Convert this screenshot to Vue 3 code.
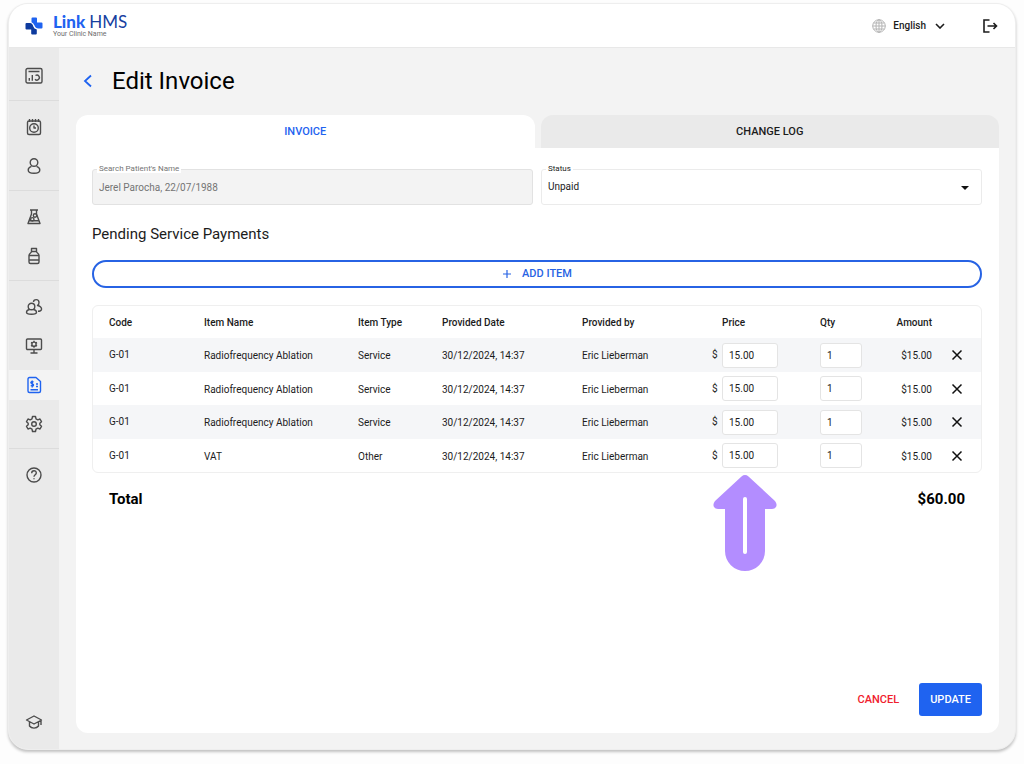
<script setup>
import { ref, computed } from 'vue'

const navGroups = [
  [{ id: 'dashboard', label: 'Dashboard' }],
  [{ id: 'calendar', label: 'Appointments' }, { id: 'patient', label: 'Patients' }],
  [{ id: 'lab', label: 'Laboratory' }, { id: 'pharmacy', label: 'Pharmacy' }],
  [
    { id: 'users', label: 'Users' },
    { id: 'monitor', label: 'Workstation' },
    { id: 'invoice', label: 'Invoices', active: true },
    { id: 'settings', label: 'Settings' }
  ],
  [{ id: 'help', label: 'Help' }]
]

const status = ref('Unpaid')
const patient = ref('Jerel Parocha, 22/07/1988')

const makeItem = (id, name, type) => ({
  id,
  code: 'G-01',
  name,
  type,
  date: '30/12/2024, 14:37',
  by: 'Eric Lieberman',
  price: '15.00',
  qty: '1'
})
const items = ref([
  makeItem(1, 'Radiofrequency Ablation', 'Service'),
  makeItem(2, 'Radiofrequency Ablation', 'Service'),
  makeItem(3, 'Radiofrequency Ablation', 'Service'),
  makeItem(4, 'VAT', 'Other')
])

const amount = (item) => (Number(item.price) || 0) * (Number(item.qty) || 0)
const money = (value) => '$' + value.toFixed(2)
const total = computed(() => items.value.reduce((sum, item) => sum + amount(item), 0))
const removeItem = (id) => {
  items.value = items.value.filter((item) => item.id !== id)
}
const addItem = () => {
  items.value.push(makeItem(Date.now(), 'Radiofrequency Ablation', 'Service'))
}
</script>

<template>
  <div class="window">
    <header class="topbar">
      <a class="brand" href="#">
        <svg class="brand-mark" viewBox="0 0 18 18" aria-hidden="true">
          <path class="mark-light" d="M6.500 1.500Q6.500 .5 7.500 .5H11Q12 .5 12 1.500V5.500H16.500Q17.500 5.500 17.500 6.500V10.500Q17.500 11.500 16.500 11.500H13.500Q10.500 11.500 9.500 8.500Q8.500 6 6.500 5.300Z" />
          <path class="mark-dark" d="M1.500 6H5Q7.500 6 8.300 9.500Q9 12 11.800 12.400V16.500Q11.800 17.500 10.800 17.500H7.200Q6.200 17.500 6.200 16.500V12.500H1.500Q.5 12.500 .5 11.500V7Q.5 6 1.500 6Z" />
        </svg>
        <span class="brand-text">
          <span class="brand-name"><b>Link</b><span>HMS</span></span>
          <span class="brand-sub">Your Clinic Name</span>
        </span>
      </a>
      <div class="top-actions">
        <button class="language" type="button">
          <svg class="globe" viewBox="0 0 14 14" aria-hidden="true">
            <circle cx="7" cy="7" r="6.300" />
            <ellipse cx="7" cy="7" rx="3" ry="6.300" />
            <path d="M7 .7V13.300M.7 7H13.300M1.500 4H12.500M1.500 10H12.500" />
          </svg>
          <span>English</span>
          <svg class="chevron" viewBox="0 0 10 6" aria-hidden="true"><path d="M1 1L5 5L9 1" /></svg>
        </button>
        <button class="logout" type="button" aria-label="Log out">
          <svg viewBox="0 0 16 14" aria-hidden="true">
            <path d="M7.500 1H2V13H7.500M5.500 7H14.500M11.500 4L14.500 7L11.500 10" />
          </svg>
        </button>
      </div>
    </header>

    <div class="body">
      <nav class="sidebar" aria-label="Main">
        <div v-for="(group, g) in navGroups" :key="g" class="nav-group">
          <a
            v-for="item in group"
            :key="item.id"
            href="#"
            class="nav-item"
            :class="{ active: item.active }"
            :aria-label="item.label"
          >
            <svg class="nav-icon" viewBox="0 0 18 18" aria-hidden="true">
              <g v-if="item.id === 'dashboard'">
                <rect x="1" y="1.500" width="16" height="14.500" rx="1.500" />
                <path d="M3.500 4.500H14.500M4.300 11V13.800M7.300 8V13.800M10.500 8.500A2.500 2.500 0 1 1 10 12.300" />
              </g>
              <g v-else-if="item.id === 'calendar'">
                <rect x="2.500" y="3" width="13" height="13.500" rx="1.500" />
                <path d="M4.500 1V4M7.500 1V4M10.500 1V4M13.500 1V4M9 7.500V10H11" />
                <circle cx="9" cy="10" r="4.300" />
              </g>
              <g v-else-if="item.id === 'patient'">
                <circle cx="9" cy="5.500" r="3.800" />
                <path d="M6.500 9.300C4 10 3.200 11.500 3.200 13C3.200 15.300 6 16.300 9 16.300S14.800 15.300 14.800 13C14.800 11.500 14 10 11.500 9.300" />
              </g>
              <g v-else-if="item.id === 'lab'">
                <path d="M5 2H13M6.500 2V6L3 15.500H15L11.500 6V2M4 12.800H14" />
                <circle cx="10" cy="7.500" r="1.700" />
                <circle cx="7.300" cy="11.300" r="1.700" />
              </g>
              <g v-else-if="item.id === 'pharmacy'">
                <path d="M6.500 1.500H11.500V4.500H6.500ZM6.500 4.500C6.500 6 4 6 4 8.500V15Q4 16.500 5.500 16.500H12.500Q14 16.500 14 15V8.500C14 6 11.500 6 11.500 4.500M4 8.500H14M4 13H14" />
              </g>
              <g v-else-if="item.id === 'users'">
                <circle cx="6.500" cy="8.500" r="3.300" />
                <path d="M4.500 11.500C2.500 12 1.500 13 1.500 14.300C1.500 16 4 16.300 6.500 16.300S11.500 16 11.500 14.300C11.500 13 10.500 12 8.500 11.500M8.500 4C8.500 1 14 .500 14 4.500C14 6 13.500 7 12.500 7.500C15 8 17 9.500 16.500 11.500C16 13 14.500 13.300 13 13.300" />
              </g>
              <g v-else-if="item.id === 'monitor'">
                <rect x="1.500" y="2" width="15" height="10.500" rx="1" />
                <path d="M9 12.500V16M5.500 16H12.500M9 3.800V5M9 9.500V10.700M6 5.500L7 6M11 8.500L12 9M6 9L7 8.500M11 6L12 5.500" />
                <circle cx="9" cy="7.200" r="2.100" />
              </g>
              <g v-else-if="item.id === 'invoice'">
                <path d="M4.500 1.500H11L15.500 5.500V15Q15.500 16.500 14 16.500H4.500Q3 16.500 3 15V3Q3 1.500 4.500 1.500ZM8.500 6C6.500 5 5.500 6 6 7C6.500 8 8.500 7.500 8.500 9C8.500 10.200 7 10.200 5.700 9.500M7.200 4.500V11.500M11 8H13M11 10.500H13M5.500 13.800H13" />
              </g>
              <g v-else-if="item.id === 'settings'">
                <path d="M7.500 1.500H10.500L11 3.800L12.800 4.800L15 4L16.500 6.700L14.800 8.200V9.800L16.500 11.300L15 14L12.800 13.200L11 14.200L10.500 16.500H7.500L7 14.200L5.200 13.200L3 14L1.500 11.300L3.200 9.800V8.200L1.500 6.700L3 4L5.200 4.800L7 3.800Z" />
                <circle cx="9" cy="9" r="2.300" />
              </g>
              <g v-else>
                <circle cx="9" cy="9" r="7" />
                <path d="M6.700 7.200C6.700 4 11.300 4 11.300 7C11.300 8.800 9 8.800 9 10.800M9 12.200V13.300" />
              </g>
            </svg>
          </a>
        </div>
        <a class="nav-item academy" href="#" aria-label="Academy">
          <svg class="nav-icon" viewBox="0 0 18 18" aria-hidden="true">
            <path d="M1.500 7L9 3L16.500 7L9 11ZM4.500 9V13C6.500 15.800 11.500 15.800 13.500 13V9M16 7.500V12" />
          </svg>
        </a>
      </nav>

      <main class="content">
        <div class="title-row">
          <button class="back" type="button" aria-label="Back">
            <svg viewBox="0 0 10 14" aria-hidden="true"><path d="M8 1.500L2 7L8 12.500" /></svg>
          </button>
          <h1>Edit Invoice</h1>
        </div>

        <div class="tabs" role="tablist">
          <button class="tab selected" type="button" role="tab" aria-selected="true">INVOICE</button>
          <button class="tab" type="button" role="tab" aria-selected="false">CHANGE LOG</button>
        </div>

        <section class="panel">
          <div class="fields">
            <div class="field disabled">
              <label for="patient">Search Patient's Name</label>
              <input id="patient" v-model="patient" type="text" disabled />
            </div>
            <div class="field">
              <label for="status">Status</label>
              <select id="status" v-model="status">
                <option>Unpaid</option>
                <option>Paid</option>
              </select>
              <svg class="caret" viewBox="0 0 8 4" aria-hidden="true"><path d="M0 0H8L4 4Z" /></svg>
            </div>
          </div>

          <h2>Pending Service Payments</h2>

          <button class="add" type="button" @click="addItem">
            <svg viewBox="0 0 10 10" aria-hidden="true"><path d="M5 1V9M1 5H9" /></svg>
            <span>ADD ITEM</span>
          </button>

          <div class="table-box">
            <table>
              <colgroup>
                <col class="c-code" /><col class="c-name" /><col class="c-type" />
                <col class="c-date" /><col class="c-by" /><col class="c-price" />
                <col class="c-qty" /><col class="c-amount" /><col class="c-remove" />
              </colgroup>
              <thead>
                <tr>
                  <th class="code">Code</th>
                  <th>Item Name</th>
                  <th>Item Type</th>
                  <th>Provided Date</th>
                  <th>Provided by</th>
                  <th class="price-head">Price</th>
                  <th>Qty</th>
                  <th class="amount">Amount</th>
                  <th></th>
                </tr>
              </thead>
              <tbody>
                <tr v-for="item in items" :key="item.id">
                  <td class="code">{{ item.code }}</td>
                  <td class="text">{{ item.name }}</td>
                  <td class="text">{{ item.type }}</td>
                  <td class="text">{{ item.date }}</td>
                  <td class="text">{{ item.by }}</td>
                  <td>
                    <label class="price">
                      <span>$</span>
                      <input v-model="item.price" type="text" aria-label="Price" />
                    </label>
                  </td>
                  <td><input v-model="item.qty" class="qty" type="text" aria-label="Quantity" /></td>
                  <td class="text amount">{{ money(amount(item)) }}</td>
                  <td class="remove-cell">
                    <button class="remove" type="button" aria-label="Remove item" @click="removeItem(item.id)">
                      <svg viewBox="0 0 12 12" aria-hidden="true"><path d="M1.500 1.500L10.500 10.500M10.500 1.500L1.500 10.500" /></svg>
                    </button>
                  </td>
                </tr>
              </tbody>
            </table>
            <svg class="pointer" viewBox="0 0 64 96" aria-hidden="true">
              <path class="pointer-body" d="M28.500 1.500Q32 -1.300 35.500 1.500L62 26Q64.500 29 63 32Q61.800 34 59 34H52V76A20 20 0 0 1 12 76V34H5Q2.200 34 1 32Q-.5 29 2 26Z" />
              <path class="pointer-line" d="M32 24V77" />
            </svg>
          </div>

          <div class="total">
            <span>Total</span>
            <span>{{ money(total) }}</span>
          </div>

          <div class="actions">
            <button class="cancel" type="button">CANCEL</button>
            <button class="update" type="button">UPDATE</button>
          </div>
        </section>
      </main>
    </div>
  </div>
</template>

<style>
body {
  margin: 0;
  background: #fdfdfd;
}
</style>

<style scoped>
* {
  box-sizing: border-box;
}
.window {
  display: flex;
  flex-direction: column;
  min-height: calc(100vh - 17px);
  margin: 3px 8px 14px;
  overflow: hidden;
  border: 1px solid #eeeeee;
  border-radius: 20px;
  background: #f3f3f3;
  box-shadow: 0 2px 3px rgba(0, 0, 0, 0.24);
  color: #1c1c1c;
  font: 10px/16px Roboto, "Liberation Sans", sans-serif;
}
button,
input,
select {
  margin: 0;
  padding: 0;
  border: 0;
  background: none;
  color: inherit;
  font: inherit;
}
button {
  cursor: pointer;
}
svg {
  display: block;
  flex: none;
  fill: none;
  stroke: currentColor;
}
a {
  color: inherit;
  text-decoration: none;
}

.topbar {
  display: flex;
  align-items: center;
  justify-content: space-between;
  height: 44px;
  padding: 0 16px;
  border-bottom: 1px solid #e8e8e8;
  background: #ffffff;
}
.brand {
  display: flex;
  align-items: center;
  gap: 10px;
}
.brand-mark {
  width: 18px;
  height: 18px;
  stroke: none;
}
.mark-light {
  fill: #1f63f0;
}
.mark-dark {
  fill: #0d3a9e;
}
.brand-text {
  display: flex;
  flex-direction: column;
}
.brand-name {
  display: flex;
  gap: 4px;
  color: #16409f;
  font: 17px/16px Lato, sans-serif;
}
.brand-name b {
  color: #1f63f0;
  font-weight: 900;
}
.brand-sub {
  color: #6e6e6e;
  font-size: 7px;
  line-height: 8px;
}
.top-actions {
  display: flex;
  align-items: center;
  gap: 36px;
}
.language {
  display: flex;
  align-items: center;
  font-weight: 500;
}
.globe {
  width: 14px;
  height: 14px;
  margin-right: 7px;
  color: #b4b4b4;
}
.chevron {
  width: 10px;
  height: 6px;
  margin-left: 9px;
  stroke-width: 1.6;
}
.logout svg {
  width: 18px;
  height: 14px;
  stroke-width: 1.6;
}

.body {
  display: flex;
  flex: 1;
}
.sidebar {
  display: flex;
  flex-direction: column;
  width: 50px;
  background: #eaeaea;
  color: #4c4c4c;
}
.nav-group {
  display: flex;
  flex-direction: column;
  gap: 9px;
  padding: 11px 0 9px;
  border-bottom: 1px solid #dcdcdc;
}
.nav-group:nth-last-child(2) {
  border-bottom: 0;
}
.nav-group:first-child {
  padding-top: 13px;
}
.nav-item {
  display: flex;
  align-items: center;
  justify-content: center;
  height: 30px;
}
.nav-item.active {
  background: #f3f3f3;
  color: #1f63f0;
}
.academy {
  margin: auto 0 12px;
}
.nav-icon {
  width: 18px;
  height: 18px;
  stroke-width: 1.4;
  stroke-linejoin: round;
}

.content {
  display: flex;
  flex: 1;
  flex-direction: column;
  min-width: 0;
  padding: 17px 16px 16px 17px;
}
.title-row {
  display: flex;
  align-items: center;
  gap: 19px;
  height: 32px;
  margin-bottom: 18px;
  padding-left: 7px;
}
.back {
  color: #1f63f0;
}
.back svg {
  width: 10px;
  height: 14px;
  stroke-width: 1.8;
}
h1 {
  margin: 0;
  color: #000000;
  font-size: 24px;
  font-weight: 400;
  line-height: 32px;
}
.tabs {
  display: flex;
  gap: 6px;
}
.tab {
  flex: 1;
  height: 33px;
  border-radius: 12px 12px 0 0;
  background: #eaeaea;
  font-size: 11px;
  font-weight: 500;
}
.tab.selected {
  background: #ffffff;
  color: #1f63f0;
}
.panel {
  display: flex;
  flex: 1;
  flex-direction: column;
  padding: 21px 17px 17px 16px;
  border-radius: 0 0 12px 12px;
  background: #ffffff;
}
.fields {
  display: grid;
  grid-template-columns: 1fr 1fr;
  gap: 8px;
}
.field {
  position: relative;
  height: 36px;
  border: 1px solid #ebebeb;
  border-radius: 3px;
}
.field.disabled {
  border-color: #e2e2e2;
  background: #f3f3f3;
  color: #757575;
}
.field label {
  position: absolute;
  top: -5px;
  left: 4px;
  padding: 0 2px;
  background: #ffffff;
  font-size: 8px;
  line-height: 8px;
}
.field input,
.field select {
  display: block;
  width: 100%;
  height: 34px;
  padding: 0 6px;
  appearance: none;
}
.caret {
  position: absolute;
  top: 16px;
  right: 12px;
  width: 8px;
  height: 4px;
  fill: #111111;
  stroke: none;
  pointer-events: none;
}
h2 {
  margin: 19px 0 16px;
  font-size: 15px;
  font-weight: 400;
  line-height: 20px;
}
.add {
  display: flex;
  align-items: center;
  justify-content: center;
  gap: 10px;
  height: 28px;
  border: 2px solid #2763e4;
  border-radius: 14px;
  color: #2763e4;
  font-size: 11px;
  font-weight: 500;
}
.add svg {
  width: 10px;
  height: 10px;
  stroke-width: 1.2;
}

.table-box {
  position: relative;
  margin-top: 17px;
}
table {
  width: 100%;
  border: 1px solid #efefef;
  border-radius: 6px;
  border-spacing: 0;
  table-layout: fixed;
}
.c-code { width: 111px; }
.c-name { width: 154px; }
.c-type { width: 84px; }
.c-date { width: 140px; }
.c-by { width: 130px; }
.c-price { width: 108px; }
.c-qty { width: 52px; }
.c-amount { width: 60px; }
.c-remove { width: 49px; }
th,
td {
  height: 33px;
  padding: 0;
  text-align: left;
  white-space: nowrap;
}
th {
  height: 32px;
  padding-top: 1px;
  font-weight: 500;
}
td.text {
  padding-top: 2px;
}
tbody tr:nth-child(odd) td {
  height: 34px;
  background: #f5f6f8;
}
.code {
  padding-left: 16px;
}
th.price-head {
  padding-left: 10px;
}
.amount {
  text-align: right;
}
.price {
  display: flex;
  align-items: center;
  gap: 4px;
}
.price span {
  width: 6px;
}
td input {
  display: block;
  width: 56px;
  height: 25px;
  padding: 0 6px;
  border: 1px solid #e4e4e4;
  border-radius: 3px;
  background: #ffffff;
}
td input.qty {
  width: 42px;
}
.remove-cell {
  padding-left: 19px;
}
.remove {
  display: block;
  color: #111111;
}
.remove svg {
  width: 12px;
  height: 12px;
  stroke-width: 1.5;
}
.pointer {
  position: absolute;
  top: 100%;
  right: 23%;
  width: 64px;
  height: 96px;
  margin-top: 2px;
  overflow: visible;
}
.pointer-body {
  fill: #b38dff;
  stroke: none;
}
.pointer-line {
  stroke: #ffffff;
  stroke-width: 4;
  stroke-linecap: round;
}
.total {
  display: flex;
  justify-content: space-between;
  padding: 16px 17px;
  color: #000000;
  font-size: 15px;
  font-weight: 700;
  line-height: 20px;
}
.actions {
  display: flex;
  justify-content: flex-end;
  gap: 9px;
  margin-top: auto;
  font-size: 11px;
  font-weight: 500;
}
.cancel {
  padding: 0 11px;
  color: #f0202e;
}
.update {
  height: 33px;
  padding: 0 11px;
  border-radius: 3px;
  background: #1f63f0;
  color: #ffffff;
}
</style>
